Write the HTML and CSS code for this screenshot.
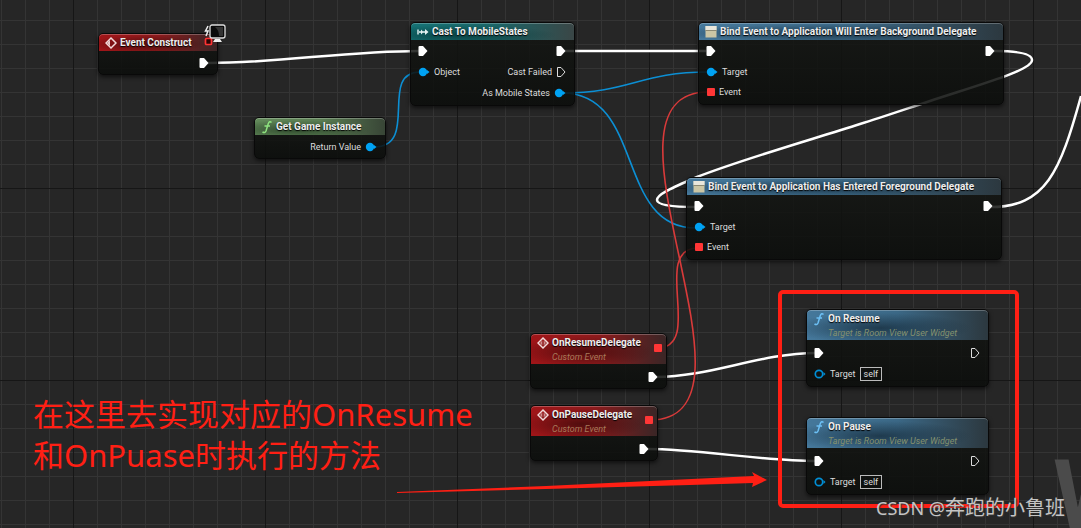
FILE: index.html
```html
<!DOCTYPE html>
<html lang="zh-CN">
<head>
<meta charset="utf-8">
<title>Event Graph</title>
<link rel="stylesheet" href="styles.css">
</head>
<body>
<svg class="defs" width="0" height="0" aria-hidden="true">
  <defs>
    <symbol id="exec" viewBox="0 0 10 12"><path d="M.5 2 Q.5 1 1.500 1 H5 L9.500 6 L5 11 H1.500 Q.5 11 .5 10Z" fill="#fff"/></symbol>
    <symbol id="exec-open" viewBox="0 0 10 12"><path d="M1.500 1.500 H5 L9 6 L5 10.500 H1.500Z" fill="none" stroke="#ddd"/></symbol>
    <symbol id="dot" viewBox="0 0 12 10"><circle cx="5" cy="5" r="4.200" fill="#00a2f3"/><path d="M9 3 L11.500 5 L9 7Z" fill="#00a2f3"/></symbol>
    <symbol id="dot-open" viewBox="0 0 12 10"><circle cx="5" cy="5" r="3.700" fill="none" stroke="#008fd6" stroke-width="1.700"/><path d="M9.500 3 L11.500 5 L9.500 7Z" fill="#008fd6"/></symbol>
    <symbol id="event" viewBox="0 0 12 12"><path d="M6 1 L11 6 L6 11 L1 6Z" fill="none" stroke="#f2dada" stroke-width="1.500"/><path d="M5.300 3.500 L3 6 L5.300 8.500Z M6.700 3.500 L9 6 L6.700 8.500Z" fill="#c98f8f"/></symbol>
    <symbol id="event-empty" viewBox="0 0 12 12"><path d="M6 1 L11 6 L6 11 L1 6Z" fill="none" stroke="#f2dada" stroke-width="1.500"/><path d="M5 3 L2 6 L5 9Z" fill="#e8caca"/></symbol>
    <symbol id="func" viewBox="0 0 12 14"><path d="M10.500 2.500 Q8.500 .5 7.300 3.500 L5 11 Q4 13.500 1.500 12 M3.500 6 H9" fill="none" stroke="currentColor" stroke-width="1.500"/></symbol>
    <symbol id="cast" viewBox="0 0 12 8"><path d="M1 1.500 V6.500 M2 4 H5 M6 4 H10" stroke="#e6f2f2" stroke-width="1.400" fill="none"/><path d="M4 1.500 L6.500 4 L4 6.500Z M8 1 L11.500 4 L8 7Z" fill="#e6f2f2"/></symbol>
    <symbol id="bind" viewBox="0 0 12 12"><rect x=".5" y="0" width="11" height="11.500" fill="#cbc6a5"/><rect x=".5" y="0" width="11" height="4" fill="#e9e7dc"/><path d="M.5 4.500 H11.500" stroke="#8d8a74"/></symbol>
  </defs>
</svg>
<main class="graph">
  <p class="graph-type">W</p>
  <svg class="wires" aria-hidden="true">
    <g class="wire exec">
      <path d="M208 63 C280 63 345 51 420 51"/>
      <path d="M565 51 H706"/>
      <path d="M994 51 C1024 51 1032 55 1032 60 C1032 70 985 83 930 101 C900 111 880 118 860 124 C810 140 740 160 697 177 C672 188 657 194 657 200 C657 206 680 207 696 207"/>
      <path d="M990 207 C1046 207 1060 172 1081 96"/>
      <path d="M656 377 C710 377 760 353 816 353"/>
      <path d="M647 449 C700 449 760 461 816 461"/>
    </g>
    <g class="wire object">
      <path d="M374 147 C420 147 378 72 420 72"/>
      <path d="M562 93 C630 93 640 72 708 72"/>
      <path d="M562 93 C645 93 615 228 696 228"/>
    </g>
    <g class="wire delegate">
      <path d="M650 420 C778 420 580 92 708 92"/>
      <path d="M657 348 C705 348 650 248 698 248"/>
    </g>
  </svg>

  <section class="node n-construct">
    <header class="head red"><svg class="ico"><use href="#event-empty"/></svg><h2>Event Construct</h2></header>
    <div class="body tight"><div class="row end"><svg class="exec-pin"><use href="#exec"/></svg></div></div>
    <svg class="badge" viewBox="0 0 24 22" aria-hidden="true">
      <path d="M5 2 L2.500 7 H5 L3 12" stroke="#eee" stroke-width="1.500" fill="none"/>
      <rect x="2.500" y="14.500" width="6" height="6" rx="1" fill="#2a0505" stroke="#f33" stroke-width="1.700"/>
      <rect x="7" y="1" width="15" height="13" rx="2" fill="#0b0b0b" stroke="#ddd" stroke-width="1.300"/>
      <path d="M12 3 Q16 6 16 12 H20 V3Z" fill="#333"/>
      <path d="M12 15 H17 L19 18 H10Z" fill="#eee"/>
    </svg>
  </section>

  <section class="node n-instance">
    <header class="head green"><svg class="ico fn"><use href="#func"/></svg><h2>Get Game Instance</h2></header>
    <div class="body tight"><div class="row end"><span>Return Value</span><svg class="dot-pin"><use href="#dot"/></svg></div></div>
  </section>

  <section class="node n-cast">
    <header class="head teal"><svg class="ico"><use href="#cast"/></svg><h2>Cast To MobileStates</h2></header>
    <div class="body flush">
      <div class="row"><svg class="exec-pin"><use href="#exec"/></svg><svg class="exec-pin right"><use href="#exec"/></svg></div>
      <div class="row"><svg class="dot-pin"><use href="#dot"/></svg><span>Object</span><span class="right">Cast Failed</span><svg class="exec-pin"><use href="#exec-open"/></svg></div>
      <div class="row end"><span>As Mobile States</span><svg class="dot-pin"><use href="#dot"/></svg></div>
    </div>
  </section>

  <section class="node n-bind-bg">
    <header class="head blue"><svg class="ico"><use href="#bind"/></svg><h2>Bind Event to Application Will Enter Background Delegate</h2></header>
    <div class="body flush">
      <div class="row"><svg class="exec-pin"><use href="#exec"/></svg><svg class="exec-pin right"><use href="#exec"/></svg></div>
      <div class="row"><svg class="dot-pin"><use href="#dot"/></svg><span>Target</span></div>
      <div class="row short"><i class="square"></i><span>Event</span></div>
    </div>
  </section>

  <section class="node n-bind-fg">
    <header class="head blue"><svg class="ico"><use href="#bind"/></svg><h2>Bind Event to Application Has Entered Foreground Delegate</h2></header>
    <div class="body flush">
      <div class="row"><svg class="exec-pin"><use href="#exec"/></svg><svg class="exec-pin right"><use href="#exec"/></svg></div>
      <div class="row"><svg class="dot-pin"><use href="#dot"/></svg><span>Target</span></div>
      <div class="row short"><i class="square"></i><span>Event</span></div>
    </div>
  </section>

  <section class="node n-resume-event">
    <header class="head red tall"><svg class="ico"><use href="#event"/></svg><div><h2>OnResumeDelegate</h2><p class="sub">Custom Event</p></div><i class="square right"></i></header>
    <div class="body event"><div class="row end"><svg class="exec-pin"><use href="#exec"/></svg></div></div>
  </section>

  <section class="node n-pause-event">
    <header class="head red tall"><svg class="ico"><use href="#event"/></svg><div><h2>OnPauseDelegate</h2><p class="sub">Custom Event</p></div><i class="square right"></i></header>
    <div class="body event"><div class="row end"><svg class="exec-pin"><use href="#exec"/></svg></div></div>
  </section>

  <section class="node n-resume">
    <header class="head blue tall"><svg class="ico fn"><use href="#func"/></svg><div><h2>On Resume</h2><p class="sub olive">Target is Room View User Widget</p></div></header>
    <div class="body">
      <div class="row"><svg class="exec-pin"><use href="#exec"/></svg><svg class="exec-pin right"><use href="#exec-open"/></svg></div>
      <div class="row"><svg class="dot-pin"><use href="#dot-open"/></svg><span>Target</span><span class="self">self</span></div>
    </div>
  </section>

  <section class="node n-pause">
    <header class="head blue tall"><svg class="ico fn"><use href="#func"/></svg><div><h2>On Pause</h2><p class="sub olive">Target is Room View User Widget</p></div></header>
    <div class="body">
      <div class="row"><svg class="exec-pin"><use href="#exec"/></svg><svg class="exec-pin right"><use href="#exec-open"/></svg></div>
      <div class="row"><svg class="dot-pin"><use href="#dot-open"/></svg><span>Target</span><span class="self">self</span></div>
    </div>
  </section>

  <div class="frame"></div>
  <svg class="arrow" viewBox="0 0 372 24" aria-hidden="true"><path d="M1 21 L150 15 L358 5 L356 1 L371 9 L356 16 L357 12 L294 14 L150 18 L1 22Z" fill="#ff1f14"/></svg>
  <p class="note">在这里去实现对应的OnResume<br>和OnPuase时执行的方法</p>
  <p class="credit"><span class="latin">CSDN @</span>奔跑的小鲁班</p>
</main>
</body>
</html>
```
FILE: styles.css
```css
* { box-sizing: border-box; }
body { margin: 0; background: #262626; }
h2, p { margin: 0; }
.defs { position: absolute; }

.graph {
  position: relative;
  min-height: 100vh;
  overflow: hidden;
  font-family: Roboto, "Liberation Sans", sans-serif;
  color: #ddd;
  background-color: #262626;
  background-image:
    linear-gradient(90deg, #161616 1px, transparent 1px),
    linear-gradient(#161616 1px, transparent 1px),
    linear-gradient(90deg, #343434 1px, transparent 1px),
    linear-gradient(#343434 1px, transparent 1px);
  background-size: 192px 192px, 192px 192px, 24px 24px, 24px 24px;
  background-position: 73px 0, 0 188px, 1px 0, 0 20px;
}

.wires { position: absolute; inset: 0; width: 100%; height: 100%; }
.wire { fill: none; }
.wire.exec { stroke: #fff; stroke-width: 2.5; }
.wire.object { stroke: #0c8fd4; stroke-width: 1.6; }
.wire.delegate { stroke: #d93a3a; stroke-width: 1.6; }

.node {
  position: absolute;
  border: 1px solid #090909;
  border-radius: 5px;
  background: linear-gradient(rgba(20, 22, 19, .84), rgba(11, 13, 11, .88));
  box-shadow: 0 2px 4px rgba(0, 0, 0, .6);
}
.n-construct { left: 98px; top: 33px; width: 120px; }
.n-instance { left: 254px; top: 117px; width: 132px; }
.n-cast { left: 410px; top: 22px; width: 165px; }
.n-bind-bg { left: 698px; top: 22px; width: 306px; }
.n-bind-fg { left: 686px; top: 177px; width: 316px; }
.n-resume-event { left: 530px; top: 333px; width: 137px; }
.n-pause-event { left: 530px; top: 405px; width: 128px; }
.n-resume { left: 806px; top: 309px; width: 183px; }
.n-pause { left: 806px; top: 417px; width: 183px; }

.head {
  display: flex;
  align-items: center;
  gap: 3px;
  height: 17px;
  padding: 0 6px;
  border-radius: 4px 4px 0 0;
  box-shadow: inset 0 1px 0 rgba(255, 255, 255, .25);
}
.head.tall { height: 30px; align-items: flex-start; padding: 2px 4px 0 6px; }
.head h2 { font-size: 10px; line-height: 14px; font-weight: 700; color: #eee; white-space: nowrap; text-shadow: 0 1px 1px #000; }
.head .square { margin-top: 8px; }
.sub { font-size: 9px; line-height: 14px; font-style: italic; color: #a87a5a; white-space: nowrap; }
.sub.olive { color: #84916f; }
.red { background: radial-gradient(ellipse at 40% 60%, rgba(40, 5, 5, .6), transparent 60%), linear-gradient(90deg, #a01518, #8c1a1c 50%, #3a2626); }
.green { background: radial-gradient(ellipse at 30% 70%, rgba(20, 40, 20, .6), transparent 60%), linear-gradient(90deg, #628a5a, #5b7f54 50%, #384536); }
.teal { background: radial-gradient(ellipse at 30% 70%, rgba(0, 40, 40, .6), transparent 60%), linear-gradient(90deg, #157275, #1a6668 50%, #3a4646); }
.blue { background: radial-gradient(ellipse at 40% 60%, rgba(15, 32, 45, .65), transparent 60%), linear-gradient(90deg, #45789b, #3b6886 50%, #2c383f); }
.ico { flex: none; width: 12px; height: 14px; }
.fn { color: #6cc0f5; }
.green .fn { color: #8ee37f; }

.body { padding: 2px 8px 2px 7px; }
.body.flush { padding-top: 0; }
.body.tight { padding-top: 1px; padding-bottom: 1px; }
.body.event { padding-bottom: 1px; }
.row { display: flex; align-items: center; gap: 4px; height: 21px; font-size: 9px; line-height: 12px; }
.row.short { height: 20px; }
.row.end { justify-content: flex-end; }
.row span { white-space: nowrap; }
.right { margin-left: auto; }
.exec-pin { flex: none; width: 10px; height: 12px; }
.dot-pin { flex: none; width: 12px; height: 10px; }
.square { flex: none; width: 8px; height: 8px; border-radius: 1px; background: #ff3636; }
.row .square { margin-left: 1px; }
.row .self { border: 1px solid #bbb; padding: 0 3px; }
.badge { position: absolute; right: -10px; top: -10px; width: 24px; height: 22px; }

.frame { position: absolute; left: 778px; top: 290px; width: 241px; height: 218px; border: 4px solid #ff1f14; border-radius: 5px; }
.arrow { position: absolute; left: 396px; top: 471px; width: 372px; height: 24px; }
.note { position: absolute; left: 33px; top: 394px; font: 31px/41px "Noto Sans", "Noto Sans CJK SC", sans-serif; color: #ff1f14; white-space: nowrap; }
.graph-type { position: absolute; left: 1053px; top: 445px; font-size: 96px; line-height: 100px; font-weight: 700; color: #4b4b4b; }
.credit { position: absolute; right: 16px; top: 494px; font: 20px/28px "Noto Sans", "Noto Sans CJK SC", sans-serif; color: #c4c4c4; text-shadow: 1px 1px 1px #333; white-space: nowrap; }
.credit .latin { font-size: 18px; }
```
